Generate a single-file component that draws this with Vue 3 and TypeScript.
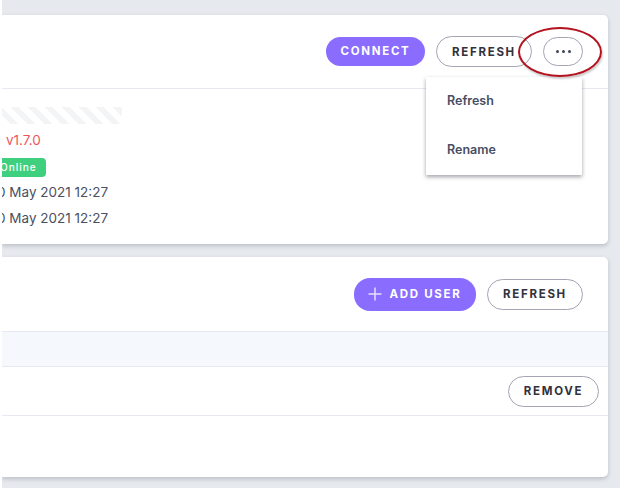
<script setup lang="ts">
const menu: string[] = ['Refresh', 'Rename']
</script>

<template>
  <div class="page">
    <section class="card top">
      <header class="head head-top">
        <button class="btn solid connect">CONNECT</button>
        <button class="btn outline refresh1">REFRESH</button>
        <button class="btn outline more"><span></span><span></span><span></span></button>
      </header>
      <div class="details">
        <div class="skeleton"></div>
        <div class="version">v1.7.0</div>
        <div class="badge"><span>Online</span></div>
        <div class="date">0 May 2021 12:27</div>
        <div class="date">0 May 2021 12:27</div>
      </div>
      <ul class="menu">
        <li v-for="m in menu" :key="m">{{ m }}</li>
      </ul>
      <div class="ring"></div>
    </section>
    <section class="card bottom">
      <header class="head head-bottom">
        <button class="btn solid add">
          <svg width="14" height="14" viewBox="0 0 14 14"><path d="M7 0.5V13.5M0.5 7H13.5" stroke="#e6e0ff" stroke-width="1.5" fill="none"/></svg>
          ADD USER
        </button>
        <button class="btn outline refresh2">REFRESH</button>
      </header>
      <div class="thead"></div>
      <div class="row"><button class="btn outline remove">REMOVE</button></div>
    </section>
  </div>
</template>

<style>
html, body { margin: 0; background: #fff; }
</style>

<style scoped>
.page {
  width: 618px;
  height: 488px;
  margin-left: 2px;
  box-sizing: border-box;
  padding: 15px 12px 0 0;
  display: flex;
  flex-direction: column;
  gap: 13px;
  overflow: hidden;
  background: #e6e9ee;
  font-family: Inter, "Noto Sans", sans-serif;
}
.card {
  position: relative;
  background: #fff;
  border-radius: 0 5px 5px 0;
  box-shadow: 0 2px 4px rgba(90, 96, 115, 0.3);
}
.top { height: 229px; }
.bottom { height: 220px; }
.head {
  display: flex;
  align-items: center;
  justify-content: flex-end;
  box-sizing: border-box;
  border-bottom: 1px solid #e6e9f2;
}
.head-top { height: 74px; padding: 0 25px 0 0; gap: 11px; }
.head-bottom { height: 75px; padding: 0 25px 0 0; gap: 11px; }
.btn {
  box-sizing: border-box;
  border-radius: 16px;
  font-family: Inter, sans-serif;
  font-weight: 700;
  font-size: 11.5px;
  letter-spacing: 1.7px;
  padding: 0;
  display: flex;
  align-items: center;
  justify-content: center;
}
.solid { background: #8a6cff; color: #fff; border: none; }
.outline { background: #fff; color: #32323c; border: 1px solid #a5a3b4; }
.connect { width: 99px; height: 29px; margin-top: -1px; }
.refresh1 { width: 96px; height: 31px; }
.more { width: 40px; height: 29px; gap: 3px; }
.more span { width: 3px; height: 3px; border-radius: 50%; background: #3f4659; }
.add { width: 122px; height: 33px; gap: 7px; }
.refresh2 { width: 96px; height: 31px; }
.details {
  padding: 18px 0 0;
  display: flex;
  flex-direction: column;
  color: #4a5062;
  font-size: 13.5px;
}
.skeleton {
  width: 120px;
  height: 17px;
  background: repeating-linear-gradient(45deg, #fff 0 6px, #f3f4f6 6px 12px);
}
.version { margin: 7px 0 0 4px; color: #f0555c; line-height: 18px; }
.badge {
  margin-top: 9px;
  width: 44px;
  height: 19px;
  background: #3fd07f;
  border-radius: 0 4px 4px 0;
  color: #fff;
  font-size: 10px;
  font-weight: 500;
  letter-spacing: 1px;
  line-height: 19px;
  overflow: hidden;
  white-space: nowrap;
}
.badge span { display: inline-block; margin-left: -2px; }
.date { margin-top: 6px; line-height: 19px; margin-left: -5px; white-space: nowrap; }
.date + .date { margin-top: 7px; }
.menu {
  position: absolute;
  left: 424px;
  top: 62px;
  width: 156px;
  height: 98px;
  margin: 0;
  padding: 0;
  list-style: none;
  background: #fff;
  box-shadow: 0 2px 4px rgba(50, 54, 70, 0.45);
  color: #474d63;
  font-size: 12.5px;
  font-weight: 600;
}
.menu li { height: 49px; line-height: 47px; padding-left: 21px; }
.ring {
  position: absolute;
  left: 516px;
  top: 12px;
  width: 84px;
  height: 50px;
  box-sizing: border-box;
  border: 2px solid #b3111d;
  border-radius: 50%;
  box-shadow: 1px 2px 2px rgba(0, 0, 0, 0.2);
  pointer-events: none;
}
.thead {
  height: 35px;
  background: #f5f8fc;
  border-bottom: 1px solid #e6e9f2;
  box-sizing: border-box;
}
.row {
  height: 49px;
  box-sizing: border-box;
  border-bottom: 1px solid #e6e9f2;
  display: flex;
  align-items: center;
  justify-content: flex-end;
  padding-right: 9px;
}
.remove { width: 91px; height: 31px; }
</style>
